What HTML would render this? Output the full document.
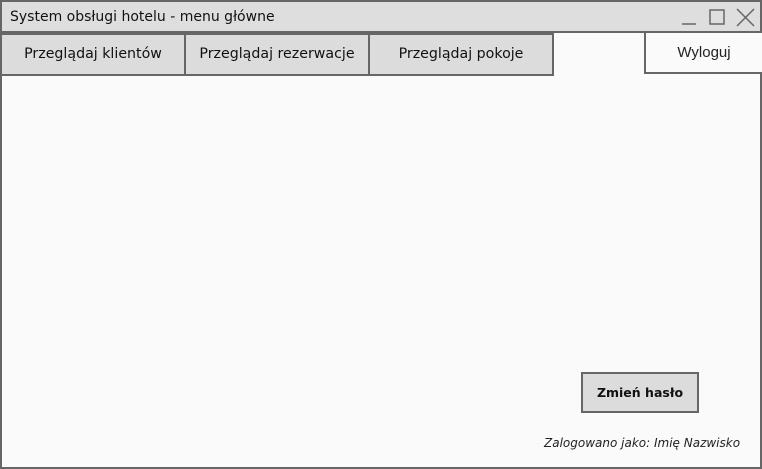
<!DOCTYPE html>
<html><head><meta charset="utf-8"><style>
*{margin:0;padding:0;box-sizing:border-box}
body{width:762px;height:469px;overflow:hidden;background:#fafafa;font-family:"DejaVu Sans",sans-serif;}
.win{position:absolute;left:0;top:0;width:762px;height:469px;border:2px solid #666;background:#fafafa}
.title{position:absolute;left:0;top:0;width:758px;height:31px;background:#dedede;border-bottom:2px solid #666;font-size:14px;color:#111;padding:7px 0 0 8px}
.tab{position:absolute;top:31px;height:43px;background:#dcdcdc;border:2px solid #666;font-size:14.2px;color:#111;text-align:center;line-height:39px}
.wy{position:absolute;left:642px;top:31px;width:118px;height:41px;border:2px solid #666;border-top:none;border-right:none;background:#fafafa;font-family:"Liberation Sans",sans-serif;font-size:15px;color:#222;text-align:center;line-height:40px}
.btn{position:absolute;left:579px;top:370px;width:118px;height:41px;border:2px solid #666;background:#dcdcdc;font-size:12.5px;font-weight:bold;color:#111;text-align:center;line-height:37px}
.foot{position:absolute;left:542px;top:434px;font-size:12px;font-style:italic;color:#222}
</style></head><body>
<div class="win">
<div class="title">System obsługi hotelu - menu główne</div>
<svg style="position:absolute;left:678px;top:5px" width="80" height="22" viewBox="0 0 80 22" fill="none" stroke="#666" stroke-width="1.5">
<line x1="2" y1="17" x2="16" y2="17"/>
<rect x="30" y="3" width="14" height="14"/>
<line x1="57" y1="2" x2="74" y2="19"/><line x1="74" y1="2" x2="57" y2="19"/>
</svg>
<div class="tab" style="left:-2px;width:186px">Przeglądaj klientów</div>
<div class="tab" style="left:182px;width:186px">Przeglądaj rezerwacje</div>
<div class="tab" style="left:366px;width:186px">Przeglądaj pokoje</div>
<div class="wy">Wyloguj</div>
<div class="btn">Zmień hasło</div>
<div class="foot">Zalogowano jako: Imię Nazwisko</div>
</div>
</body></html>
